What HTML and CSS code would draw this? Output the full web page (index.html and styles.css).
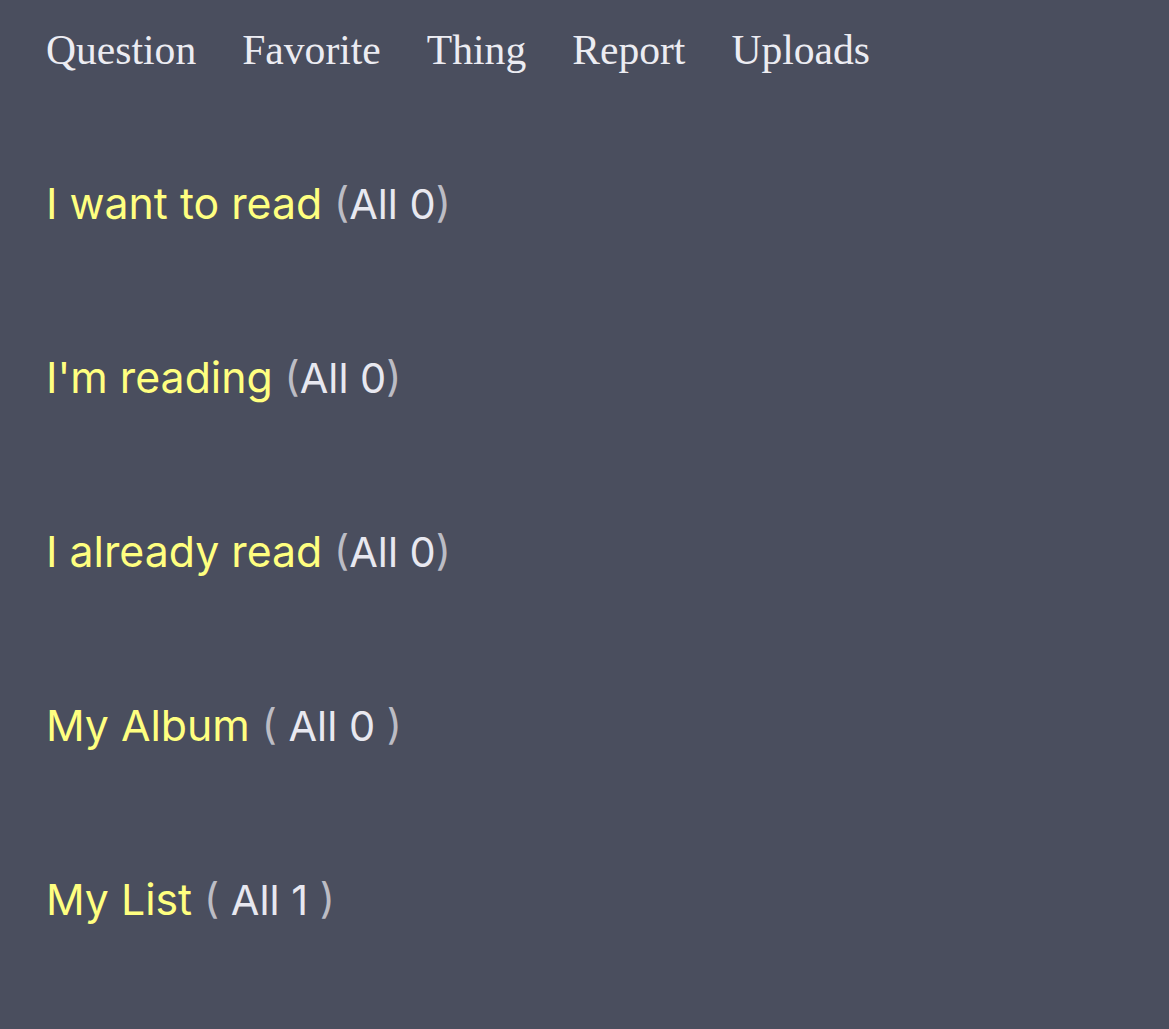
FILE: index.html
```html
<!DOCTYPE html>
<html lang="en">
<head>
    <meta charset="UTF-8">
    <meta name="viewport" content="width=device-width, initial-scale=1.0">
    <title>My Library</title>
    <link rel="stylesheet" href="styles.css">
</head>
<body>

<!-- Top Navigation Bar -->
<div class="navbar">
    <a href="#">Question</a>
    <a href="#">Favorite</a>
    <a href="#">Thing</a>
    <a href="#">Report</a>
    <a href="#">Uploads</a>
</div>

<!-- Shelf list -->
<div class="shelves">
    <div class="shelf">
        <a href="#" class="shelf-name">I want to read</a>
        <span class="count"><span class="paren">(</span>All 0<span class="paren">)</span></span>
    </div>
    <div class="shelf">
        <a href="#" class="shelf-name">I'm reading</a>
        <span class="count"><span class="paren">(</span>All 0<span class="paren">)</span></span>
    </div>
    <div class="shelf">
        <a href="#" class="shelf-name">I already read</a>
        <span class="count"><span class="paren">(</span>All 0<span class="paren">)</span></span>
    </div>
    <div class="shelf">
        <a href="#" class="shelf-name">My Album</a>
        <span class="count"><span class="paren">(</span> All 0 <span class="paren">)</span></span>
    </div>
    <div class="shelf">
        <a href="#" class="shelf-name">My List</a>
        <span class="count"><span class="paren">(</span> All 1 <span class="paren">)</span></span>
    </div>
</div>

</body>
</html>
```

FILE: styles.css
```css
body {
    margin: 0;
    padding: 22px 46px;
    background-color: #4a4e5e;
    font-family: Inter, "Noto Sans", sans-serif;
}
.navbar {
    display: flex;
    gap: 46px;
}
.navbar a {
    font-family: "Liberation Serif", serif;
    font-size: 41.6px;
    line-height: 56px;
    color: #ececf2;
    text-decoration: none;
}
.shelves {
    display: flex;
    flex-direction: column;
    gap: 124px;
    margin-top: 101px;
}
.shelf {
    font-size: 42px;
    line-height: 50px;
}
.shelf-name {
    color: #ffff80;
    text-decoration: none;
    font-size: 42.8px;
}
.count {
    color: #e8e8f0;
    font-size: 41.5px;
}
.paren {
    color: #bcbcc4;
}
```
